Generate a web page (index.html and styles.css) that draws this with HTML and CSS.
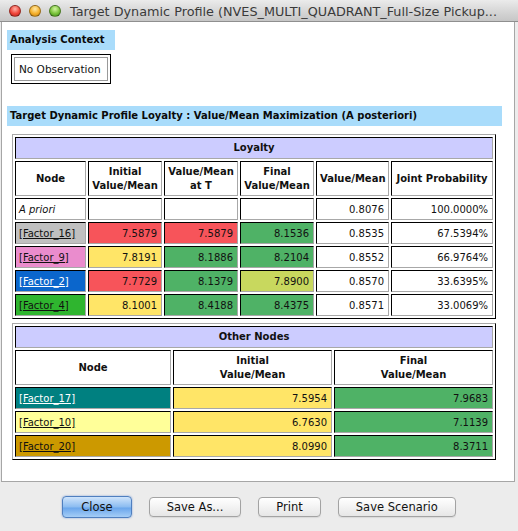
FILE: index.html
```html
<!DOCTYPE html>
<html lang="en">
<head>
    <meta charset="UTF-8">
    <title>Target Dynamic Profile</title>
    <link rel="stylesheet" href="styles.css">
</head>
<body>
    <div class="window">
        <div class="titlebar">
            <div class="lights">
                <span class="light red"></span>
                <span class="light yellow"></span>
                <span class="light green"></span>
            </div>
            <div class="title">Target Dynamic Profile (NVES_MULTI_QUADRANT_Full-Size Pickup...</div>
        </div>

        <div class="panel">
            <div class="section-title">Analysis Context</div>
            <div class="evidence">
                <span>No Observation</span>
            </div>

            <div class="section-title wide">Target Dynamic Profile Loyalty : Value/Mean Maximization (A posteriori)</div>

            <!-- target node -->
            <table class="grid loyalty">
                <colgroup>
                    <col style="width: 71px">
                    <col style="width: 74px">
                    <col style="width: 74px">
                    <col style="width: 74px">
                    <col style="width: 73px">
                    <col style="width: 102px">
                </colgroup>
                <tr><th class="group" colspan="6">Loyalty</th></tr>
                <tr class="head">
                    <th>Node</th>
                    <th>Initial<br>Value/Mean</th>
                    <th>Value/Mean<br>at T</th>
                    <th>Final<br>Value/Mean</th>
                    <th>Value/Mean</th>
                    <th>Joint Probability</th>
                </tr>
                <tr>
                    <td class="prior">A priori</td>
                    <td></td>
                    <td></td>
                    <td></td>
                    <td class="num">0.8076</td>
                    <td class="num">100.0000%</td>
                </tr>
                <tr>
                    <td class="node silver"><a href="#">[Factor_16]</a></td>
                    <td class="num red">7.5879</td>
                    <td class="num red">7.5879</td>
                    <td class="num green">8.1536</td>
                    <td class="num">0.8535</td>
                    <td class="num">67.5394%</td>
                </tr>
                <tr>
                    <td class="node pink"><a href="#">[Factor_9]</a></td>
                    <td class="num yellow">7.8191</td>
                    <td class="num green">8.1886</td>
                    <td class="num green">8.2104</td>
                    <td class="num">0.8552</td>
                    <td class="num">66.9764%</td>
                </tr>
                <tr>
                    <td class="node blue"><a href="#">[Factor_2]</a></td>
                    <td class="num red">7.7729</td>
                    <td class="num green">8.1379</td>
                    <td class="num lime">7.8900</td>
                    <td class="num">0.8570</td>
                    <td class="num">33.6395%</td>
                </tr>
                <tr>
                    <td class="node leaf"><a href="#">[Factor_4]</a></td>
                    <td class="num yellow">8.1001</td>
                    <td class="num green">8.4188</td>
                    <td class="num green">8.4375</td>
                    <td class="num">0.8571</td>
                    <td class="num">33.0069%</td>
                </tr>
            </table>

            <!-- remaining nodes -->
            <table class="grid others">
                <colgroup>
                    <col style="width: 156px">
                    <col style="width: 159px">
                    <col style="width: 159px">
                </colgroup>
                <tr><th class="group" colspan="3">Other Nodes</th></tr>
                <tr class="head">
                    <th>Node</th>
                    <th>Initial<br>Value/Mean</th>
                    <th>Final<br>Value/Mean</th>
                </tr>
                <tr>
                    <td class="node teal"><a href="#">[Factor_17]</a></td>
                    <td class="num yellow">7.5954</td>
                    <td class="num green">7.9683</td>
                </tr>
                <tr>
                    <td class="node cream"><a href="#">[Factor_10]</a></td>
                    <td class="num yellow">6.7630</td>
                    <td class="num green">7.1139</td>
                </tr>
                <tr>
                    <td class="node gold"><a href="#">[Factor_20]</a></td>
                    <td class="num yellow">8.0990</td>
                    <td class="num green">8.3711</td>
                </tr>
            </table>
        </div>

        <div class="buttons">
            <button class="btn default">Close</button>
            <button class="btn">Save As...</button>
            <button class="btn">Print</button>
            <button class="btn">Save Scenario</button>
        </div>
    </div>
</body>
</html>
```

FILE: styles.css
```css
* {
    margin: 0;
    padding: 0;
    box-sizing: border-box;
}

body {
    font-family: 'DejaVu Sans', 'Liberation Sans', sans-serif;
    background-color: #ececec;
    color: #111;
}

.window {
    width: 518px;
    height: 531px;
    display: flex;
    flex-direction: column;
}

/* title bar */
.titlebar {
    height: 22px;
    display: flex;
    align-items: center;
    background: linear-gradient(#ebebeb, #d4d4d4 60%, #c6c6c6);
    border-bottom: 1px solid #8f8f8f;
}

.lights {
    display: flex;
    gap: 8px;
    padding-left: 9px;
    width: 70px;
}

.light {
    width: 12px;
    height: 12px;
    border-radius: 50%;
    border: 1px solid rgba(0, 0, 0, 0.35);
}

.light.red {
    background: radial-gradient(circle at 50% 30%, #ffb3a8, #f0453a 55%, #b7231c);
}

.light.yellow {
    background: radial-gradient(circle at 50% 30%, #ffe9a6, #f5b02c 55%, #c07d10);
}

.light.green {
    background: radial-gradient(circle at 50% 30%, #d4f5a2, #79c33a 55%, #3f8a1a);
}

.title {
    font-size: 12.8px;
    color: #3a3a3a;
    white-space: nowrap;
    padding-top: 1px;
}

/* content */
.panel {
    flex: 1;
    margin: 0 3px 0 1px;
    background-color: #fff;
    border: 1px solid #a6a6a6;
    border-top: none;
    padding: 8px 12px 0 5px;
}

.section-title {
    width: fit-content;
    height: 20px;
    line-height: 20px;
    padding: 0 10px 0 3px;
    background-color: #a9dcfb;
    font-size: 10px;
    font-weight: bold;
    color: #0a0a0a;
}

.section-title.wide {
    width: auto;
    margin-top: 22px;
}

.evidence {
    width: 100px;
    height: 30px;
    margin: 4px 0 0 4px;
    padding: 2px;
    border: 1px solid #000;
}

.evidence span {
    display: block;
    height: 24px;
    line-height: 22px;
    border: 1px solid #9a9a9a;
    padding-left: 4px;
    font-size: 10.5px;
}

/* tables */
.grid {
    width: 484px;
    margin: 8px 0 0 5px;
    table-layout: fixed;
    border-collapse: separate;
    border-spacing: 2px;
    border: 1px solid;
    border-color: #a8a8a8 #000 #000 #a8a8a8;
    font-size: 10px;
}

.grid.others {
    margin-top: 4px;
}

.grid th,
.grid td {
    border: 1px solid;
    border-color: #000 #a8a8a8 #a8a8a8 #000;
    padding: 0 3px;
    height: 22px;
    white-space: nowrap;
    overflow: hidden;
}

.grid th {
    font-weight: bold;
    text-align: center;
    line-height: 14px;
}

.grid th.group {
    background-color: #ccccff;
}

.grid .head th {
    height: 35px;
}

.grid td.num {
    text-align: right;
    padding-right: 4px;
}

.grid td.prior {
    font-style: italic;
}

.grid td.node a {
    color: #111;
}

.red { background-color: #f7545a; }
.yellow { background-color: #ffe567; }
.green { background-color: #4fb266; }
.lime { background-color: #c8d85e; }

.silver { background-color: #c0c0c0; }
.pink { background-color: #ea8ccd; }
.blue { background-color: #0b66cc; }
.leaf { background-color: #2fb52f; }
.teal { background-color: #008080; }
.cream { background-color: #ffff99; }
.gold { background-color: #cc9900; }

.grid td.blue a,
.grid td.teal a {
    color: #fff;
}

/* buttons */
.buttons {
    height: 49px;
    display: flex;
    justify-content: center;
    align-items: center;
    gap: 17px;
    padding-top: 1px;
}

.btn {
    height: 20px;
    padding: 0 17px;
    font-family: 'DejaVu Sans', sans-serif;
    font-size: 11.5px;
    color: #111;
    background: linear-gradient(#ffffff, #f3f3f3 50%, #e6e6e6);
    border: 1px solid #a3a3a3;
    border-radius: 4px;
    box-shadow: 0 1px 1px rgba(0, 0, 0, 0.08);
}

.btn.default {
    height: 22px;
    padding: 0 18px;
    background: linear-gradient(#cfe4fb, #8bbcf1 50%, #6aa6ec 55%, #a5cdf6);
    border-color: #4f7fbf;
    box-shadow: 0 0 2px rgba(40, 100, 200, 0.6);
}
```
